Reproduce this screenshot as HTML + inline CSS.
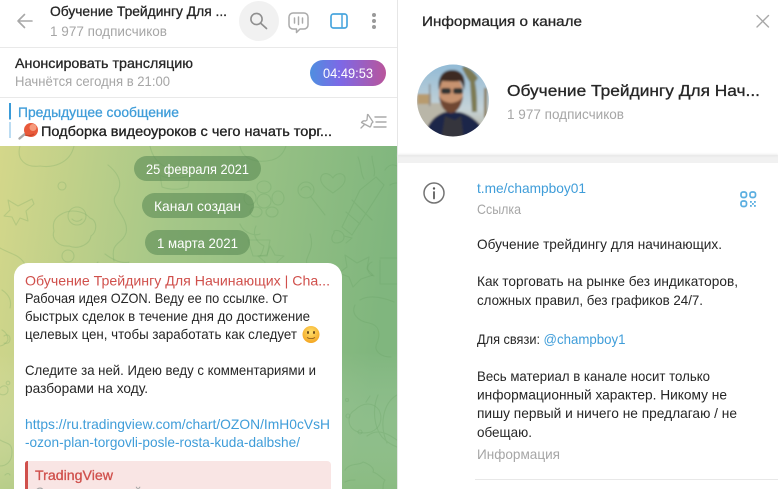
<!DOCTYPE html>
<html lang="ru"><head><meta charset="utf-8"><title>Telegram</title>
<style>
html,body{margin:0;padding:0;background:#fff;width:778px;height:489px;overflow:hidden}
svg{display:block;filter:blur(.25px)}
text{font-family:"Liberation Sans","DejaVu Sans",sans-serif;font-size:14px;fill:#262626}
.g{fill:#a6a6a6}.b{fill:#3f9dd9}.w{fill:#fff}.m{stroke:currentColor;stroke-width:.3px}
</style></head><body>
<svg width="778" height="489" viewBox="0 0 778 489" xmlns="http://www.w3.org/2000/svg">
<defs>
<linearGradient id="bg" x1="0" y1="0" x2="1" y2="0.12"><stop offset="0" stop-color="#d4d78a"/><stop offset=".45" stop-color="#a5c788"/><stop offset="1" stop-color="#80b67e"/></linearGradient>
<linearGradient id="bg2" x1="0" y1="0" x2="0" y2="1"><stop offset=".6" stop-color="#fff" stop-opacity="0"/><stop offset="1" stop-color="#9cc488" stop-opacity=".35"/></linearGradient>
<linearGradient id="pill" x1="0" y1="0" x2="1" y2="0"><stop offset="0" stop-color="#4f8fe0"/><stop offset=".4" stop-color="#7d68e6"/><stop offset="1" stop-color="#b9559b"/></linearGradient>
<radialGradient id="smile" cx=".5" cy=".35" r=".7"><stop offset="0" stop-color="#ffdf6a"/><stop offset="1" stop-color="#f3a11c"/></radialGradient>
<linearGradient id="sky" x1="0" y1="0" x2="0" y2="1"><stop offset="0" stop-color="#8fb9d6"/><stop offset=".6" stop-color="#c5d3d8"/><stop offset="1" stop-color="#b5a98f"/></linearGradient>
<clipPath id="av"><circle cx="453" cy="100.500" r="36"/></clipPath>
<clipPath id="chat"><rect x="0" y="146" width="397" height="343"/></clipPath>
<filter id="bl" x="-10%" y="-10%" width="120%" height="120%"><feGaussianBlur stdDeviation="1"/></filter>
<filter id="sh" x="-10%" y="-200%" width="120%" height="500%"><feGaussianBlur stdDeviation="1"/></filter>
</defs>

<!-- chat background -->
<rect x="0" y="146" width="397" height="343" fill="url(#bg)"/>
<rect x="0" y="146" width="397" height="343" fill="url(#bg2)"/>
<g clip-path="url(#chat)" fill="none" stroke="#5f9a5c" stroke-opacity=".22" stroke-width="1.100" stroke-linecap="round" stroke-linejoin="round">
<path d="M20 146c-4 14 6 22 20 20 12 2 30-2 34-20"/>
<path d="M108 165c10 8 16 18 8 30-8 10 14 22 10 38-4 12-16 8-12 28"/>
<circle cx="62" cy="186" r="4"/>
<path d="M8 200l10 6 14-7 2 5-8 7 2 10-8-3-4 7-4-8-8-1 6-6z"/>
<path d="M60 215c10-7 24-4 30 3 8 3 7 14 1 18-1 8-12 14-22 10-10 1-18-7-15-15-2-8 1-13 6-16z"/>
<circle cx="77" cy="216" r="9"/><path d="M72 219c3 3 7 3 10 0"/>
<path d="M105 254c8 6 16 10 24 8l-8 14-12 20M98 262l-14 16c-4 8-8 10-14 12"/>
<path d="M0 248c10 6 20 6 26 18 6 4 8 10 6 20"/>
<circle cx="68" cy="256" r="6"/>
<path d="M150 146c2 10 8 18 18 22M240 146c2 12 14 18 32 14 8-2 12-8 14-14"/>
<path d="M160 175c6 4 24 4 30 0l-2 12c-8 3-18 3-26 0z"/>
<circle cx="264" cy="201" r="7"/><ellipse cx="264" cy="187" rx="7" ry="6"/><ellipse cx="278" cy="198" rx="6" ry="7"/><ellipse cx="250" cy="198" rx="6" ry="7"/><ellipse cx="272" cy="212" rx="6" ry="5"/><ellipse cx="256" cy="212" rx="6" ry="5"/>
<path d="M256 226c-4 8 0 16 8 20-1 4-2 8-4 10M240 224c4 10 16 12 20 10"/>
<path d="M248 240h22l-3 16h-14z"/>
<path d="M333 178c-6-8-14-4-12 3 2 6 8 9 12 12 5-4 11-7 12-13 1-7-8-9-12-2z"/>
<circle cx="306" cy="190" r="8"/><path d="M311 197l14 18M301 190c2-4 8-5 10 0"/>
<path d="M360 190l16-13 8 8-10 16-22 34-10-8zM352 200l20 20M346 212l14 12"/>
<path d="M358 157c4 10 2 16 6 22M372 156c0 8 4 14 2 20"/>
<path d="M385 170c4-6 8-6 12-4M390 185c3-2 5-2 7-2"/>
<path d="M334 231c5-2 10 2 10 6s-4 6-8 6-6-5-2-10zM344 236l8 2-6 5"/>
<path d="M310 234c6 18-8 24-2 32 6 8 18-6 26 4"/>
<path d="M270 246l5 9 9 1-7 6 2 9-8-5-8 5 2-9-7-6 9-1z"/>
<path d="M345 255l12 8 12-6-2 12 6 6-12 4-8 8-4-10-10-4 8-6z"/>
<path d="M380 258h17M380 260v24h17M372 262c-6 2-6 12 2 14"/>
<path d="M360 300c10-6 24-2 34 2M355 305c-4 8 2 16 14 18 10 2 12 10 8 20-4 8 4 14 14 14"/>
<path d="M2 290c6 4 10 10 8 18"/>
<path d="M0 388c4-4 8-2 8 2s-4 6-8 4M4 336c3-2 6-1 6 3s-3 5-6 4"/>
<path d="M355 410c8-8 18-8 24 0 4 8 2 18-8 22-12 3-22-2-22-12 0-4 2-8 6-10zM366 402l4-6"/>
<circle cx="348" cy="416" r="2"/><circle cx="360" cy="432" r="2"/>
<path d="M397 395c-14 8-18 30-10 48M397 440c-14-10-22-10-30-4M378 395c-6 14-4 32 4 42 6 6 10 8 15 10"/>
<path d="M345 470c6-8 14-4 18-8 6 2 12 6 10 10 6 2 8 6 12 8-2 2-2 6-2 9M345 482c4-2 6-2 10-2"/>
<path d="M0 440c6 4 12 2 12 12s-6 14-12 14M5 475c2-2 4-2 5 0"/>
<circle cx="8" cy="383" r="1.800"/><circle cx="347" cy="400" r="1.500"/>
<path d="M2 330c4 2 6 6 6 10-2 4-6 6-8 6"/>
</g>

<!-- date pills -->
<rect x="134" y="156" width="127" height="25" rx="12.500" fill="#5a8a55" fill-opacity=".58"/>
<text class="w" x="146" y="174" textLength="103" lengthAdjust="spacingAndGlyphs">25 февраля 2021</text>
<rect x="142" y="193" width="112" height="25" rx="12.500" fill="#5a8a55" fill-opacity=".58"/>
<text class="w" x="154" y="211" textLength="87" lengthAdjust="spacingAndGlyphs">Канал создан</text>
<rect x="145" y="230" width="105" height="25" rx="12.500" fill="#5a8a55" fill-opacity=".58"/>
<text class="w" x="157" y="248" textLength="81" lengthAdjust="spacingAndGlyphs">1 марта 2021</text>

<!-- message bubble -->
<rect x="14" y="263" width="328" height="250" rx="14" fill="#fff"/>
<text x="25" y="285.500" textLength="305" lengthAdjust="spacingAndGlyphs" style="fill:#d0504c">Обучение Трейдингу Для Начинающих | Cha...</text>
<text x="25" y="303" textLength="263" lengthAdjust="spacingAndGlyphs">Рабочая идея OZON. Веду ее по ссылке. От</text>
<text x="25" y="321" textLength="285" lengthAdjust="spacingAndGlyphs">быстрых сделок в течение дня до достижение</text>
<text x="25" y="339" textLength="272" lengthAdjust="spacingAndGlyphs">целевых цен, чтобы заработать как следует</text>
<circle cx="311" cy="334.500" r="8.500" fill="url(#smile)"/>
<ellipse cx="308" cy="332.500" rx="1" ry="1.500" fill="#6b4a1a"/><ellipse cx="314" cy="332.500" rx="1" ry="1.500" fill="#6b4a1a"/>
<path d="M307 337.500c2 1.500 6 1.500 8 0" fill="none" stroke="#8a5a1a" stroke-width=".8"/>
<text x="25" y="375" textLength="291" lengthAdjust="spacingAndGlyphs">Следите за ней. Идею веду с комментариями и</text>
<text x="25" y="393" textLength="123" lengthAdjust="spacingAndGlyphs">разборами на ходу.</text>
<text class="b" x="25" y="429" textLength="305" lengthAdjust="spacingAndGlyphs">https://ru.tradingview.com/chart/OZON/ImH0cVsH</text>
<text class="b" x="25" y="447" textLength="275" lengthAdjust="spacingAndGlyphs">-ozon-plan-torgovli-posle-rosta-kuda-dalbshe/</text>
<rect x="25" y="461" width="306" height="40" rx="4" fill="#f9e5e4"/>
<path d="M28 461h-0.500a2.500 2.500 0 0 0-2.500 2.500v26h3z" fill="#d0504c"/>
<text class="m" x="35" y="480" textLength="78" lengthAdjust="spacingAndGlyphs" style="fill:#d0504c;color:#d0504c">TradingView</text>
<text x="35" y="497" textLength="250" lengthAdjust="spacingAndGlyphs" class="g">Следите за идеей и торговыми сигналами</text>

<!-- left panel header -->
<rect x="0" y="0" width="397" height="146" fill="#fff"/>
<rect x="0" y="47" width="397" height="1" fill="#e9e9e9"/>
<rect x="0" y="97" width="397" height="1" fill="#e9e9e9"/>
<rect x="397" y="0" width="1" height="489" fill="#e6e6e6"/>
<path d="M32 21H18M24.500 14.500L18 21l6.500 6.500" fill="none" stroke="#a8a8a8" stroke-width="1.600" stroke-linecap="round" stroke-linejoin="round"/>
<text class="m" x="50" y="16" textLength="177" lengthAdjust="spacingAndGlyphs" style="color:#262626">Обучение Трейдингу Для ...</text>
<text class="g" x="50" y="36" textLength="117" lengthAdjust="spacingAndGlyphs">1 977 подписчиков</text>
<circle cx="259" cy="21" r="20" fill="#f1f1f1"/>
<circle cx="256.500" cy="19" r="5.600" fill="none" stroke="#8f8f8f" stroke-width="1.600"/>
<path d="M261 23.500l5.500 5" stroke="#8f8f8f" stroke-width="1.700" stroke-linecap="round"/>
<path d="M293 13h11a4 4 0 0 1 4 4v8a4 4 0 0 1-4 4h-4l-3.500 3.500V29h-3.500a4 4 0 0 1-4-4v-8a4 4 0 0 1 4-4z" fill="none" stroke="#aaa" stroke-width="1.500" stroke-linejoin="round"/>
<path d="M294.500 18v5M298.500 17v7.500M302.500 18v5" stroke="#aaa" stroke-width="1.500" stroke-linecap="round"/>
<rect x="331" y="14" width="16" height="14" rx="2.500" fill="none" stroke="#4aa6de" stroke-width="1.700"/>
<path d="M342 14v14" stroke="#4aa6de" stroke-width="1.500"/>
<circle cx="374" cy="15" r="2" fill="#9a9a9a"/><circle cx="374" cy="21" r="2" fill="#9a9a9a"/><circle cx="374" cy="27" r="2" fill="#9a9a9a"/>

<text class="m" x="15" y="68" textLength="178" lengthAdjust="spacingAndGlyphs" style="color:#262626">Анонсировать трансляцию</text>
<text class="g" x="15" y="86" textLength="155" lengthAdjust="spacingAndGlyphs">Начнётся сегодня в 21:00</text>
<rect x="310" y="60" width="76" height="26" rx="13" fill="url(#pill)"/>
<text class="w" x="323" y="78" textLength="50" lengthAdjust="spacingAndGlyphs">04:49:53</text>

<rect x="9" y="103" width="2" height="16.500" fill="#3a9bd8"/>
<rect x="9" y="122" width="2" height="16" fill="#bcdcf2"/>
<text class="m" x="18" y="117" textLength="161" lengthAdjust="spacingAndGlyphs" style="fill:#3f9dd9;color:#3f9dd9">Предыдущее сообщение</text>
<path d="M19.500 138.500l6-5" stroke="#a9a9a9" stroke-width="2.400" stroke-linecap="round"/>
<circle cx="31" cy="130" r="7" fill="#e8593a"/>
<circle cx="33" cy="127.500" r="3.500" fill="#f69a7c"/>
<path d="M25 135c3 1 6 1 9-1" fill="none" stroke="#c8452a" stroke-width="1.200"/>
<text class="m" x="41" y="136" textLength="291" lengthAdjust="spacingAndGlyphs" style="color:#111">Подборка видеоуроков с  чего начать торг...</text>
<path d="M368 114.500l5 7.500-1.500 1.500c-.3 2-.6 3-1.500 3.500l-8.500-4.500c1-1.500 2.500-2 4-1.500l1.500-1 .5-5.500z" fill="none" stroke="#aaa" stroke-width="1.300" stroke-linejoin="round"/>
<path d="M364.500 124.500l-3.500 3.500" stroke="#aaa" stroke-width="1.300" stroke-linecap="round"/>
<path d="M375 117h11M376 122h10M374 127h12" stroke="#aaa" stroke-width="1.400" stroke-linecap="round"/>

<!-- right panel -->
<text class="m" x="422" y="26" textLength="160" lengthAdjust="spacingAndGlyphs" style="color:#2a2a2a">Информация о канале</text>
<path d="M757 15.500l11.500 11.500M768.500 15.500L757 27" stroke="#a8a8a8" stroke-width="1.400" stroke-linecap="round"/>

<g clip-path="url(#av)"><g filter="url(#bl)">
<rect x="414" y="62" width="78" height="78" fill="url(#sky)"/>
<rect x="416" y="103" width="40" height="36" fill="#b9b6a8"/>
<path d="M417 94h14v10h-14z" fill="#b89b6e"/>
<rect x="429" y="84" width="1.500" height="22" fill="#8a8a8a"/>
<path d="M464 66c6 2 10 6 14 12l-3 4c2 10 2 20 2 30l-5 0-2-30c-3-4-6-10-8-14z" fill="#7d7a52"/>
<rect x="484" y="88" width="3" height="30" fill="#8d7f5f"/>
<path d="M425 140c0-14 8-24 20-28l14 0c12 2 26 14 28 28z" fill="#1c2748"/>
<path d="M441 140l4-24 10 4 6-4 3 24z" fill="#34343c"/>
<ellipse cx="451" cy="93" rx="12" ry="17" fill="#c7936f"/>
<path d="M439 96c1 10 6 17 12 17s11-7 12-17c-2 4-5 6-12 7-7-1-10-3-12-7z" fill="#6f4630"/>
<path d="M439 90c-2-13 4-20 13-20s15 6 12 20c-1-4-2-7-4-9-6 1-13 0-18 0-1 3-2 6-3 9z" fill="#3e2a20"/>
<rect x="441" y="88" width="10" height="6" rx="2.500" fill="#2d3033"/><rect x="453" y="88" width="10" height="6" rx="2.500" fill="#2d3033"/>
</g></g>

<text class="m" x="507" y="96" textLength="253" lengthAdjust="spacingAndGlyphs" style="font-size:15.500px;color:#262626">Обучение Трейдингу Для Нач...</text>
<text class="g" x="507" y="119" textLength="117" lengthAdjust="spacingAndGlyphs">1 977 подписчиков</text>

<rect x="398" y="155" width="380" height="8" fill="#f1f1f1"/>
<rect x="398" y="154.500" width="380" height="1.500" fill="#e2e2e2" filter="url(#sh)"/>

<circle cx="434" cy="193" r="10" fill="none" stroke="#737373" stroke-width="1.500"/>
<circle cx="434" cy="188.500" r="1.200" fill="#555"/><path d="M434 192v6.500" stroke="#555" stroke-width="1.700" stroke-linecap="round"/>
<text class="b" x="477" y="193" textLength="109" lengthAdjust="spacingAndGlyphs">t.me/champboy01</text>
<text class="g" x="477" y="214" textLength="44" lengthAdjust="spacingAndGlyphs">Ссылка</text>
<g fill="none" stroke="#5aaee0" stroke-width="1.700">
<rect x="741" y="192" width="5.500" height="5.500" rx="2"/><rect x="750" y="192" width="5.500" height="5.500" rx="2"/><rect x="741" y="201" width="5.500" height="5.500" rx="2"/>
</g>
<g fill="#5aaee0"><rect x="750" y="201" width="1.800" height="1.800"/><rect x="754" y="201" width="1.800" height="1.800"/><rect x="752" y="203" width="1.800" height="1.800"/><rect x="750" y="205" width="1.800" height="1.800"/><rect x="754" y="205" width="1.800" height="1.800"/></g>

<text x="477" y="249" textLength="245" lengthAdjust="spacingAndGlyphs">Обучение трейдингу для начинающих.</text>
<text x="477" y="286" textLength="261" lengthAdjust="spacingAndGlyphs">Как торговать на рынке без индикаторов,</text>
<text x="477" y="305" textLength="226" lengthAdjust="spacingAndGlyphs">сложных правил, без графиков 24/7.</text>
<text x="477" y="344" textLength="63" lengthAdjust="spacingAndGlyphs">Для связи:</text>
<text class="b" x="543.500" y="344" textLength="82" lengthAdjust="spacingAndGlyphs">@champboy1</text>
<text x="477" y="381" textLength="233" lengthAdjust="spacingAndGlyphs">Весь материал в канале носит только</text>
<text x="477" y="399.500" textLength="250" lengthAdjust="spacingAndGlyphs">информационный характер. Никому не</text>
<text x="477" y="418" textLength="260" lengthAdjust="spacingAndGlyphs">пишу первый и ничего не предлагаю / не</text>
<text x="477" y="437" textLength="55" lengthAdjust="spacingAndGlyphs">обещаю.</text>
<text class="g" x="477" y="459" textLength="83" lengthAdjust="spacingAndGlyphs">Информация</text>
<rect x="475" y="479" width="303" height="1" fill="#e8e8e8"/>
</svg>
</body></html>
